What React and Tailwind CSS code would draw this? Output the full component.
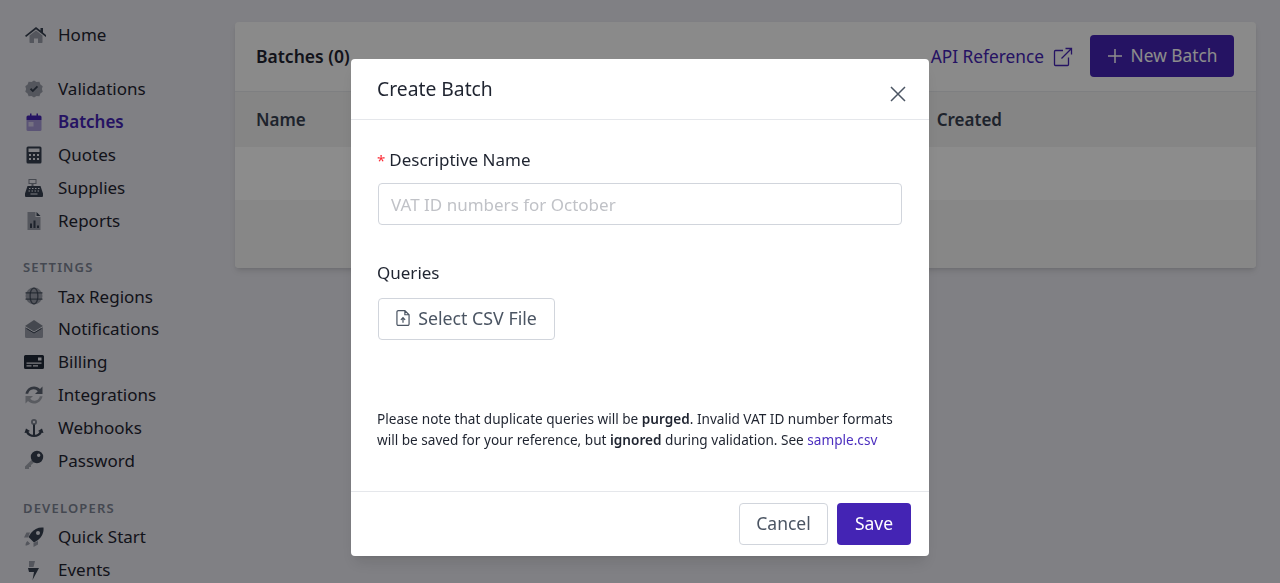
import React from "react";

const Duo = ({ children, w = 20 }) => (
  <svg width={w} height={20} viewBox="0 0 20 20" className="shrink-0 text-[#374151]" fill="currentColor">
    {children}
  </svg>
);

const HomeIcon = () => (
  <Duo w={22}>
    <path opacity=".45" d="M4.500 10.500 11 5.500l6.500 5v6.700a.8.8 0 0 1-.8.8H13v-4.500H9V18H5.300a.8.8 0 0 1-.8-.8z" />
    <path d="M11 2 15.500 5.500V3h2.500v4.500l4 3.200-1.100 1.300L11 4.300 1.100 12 0 10.700z" />
  </Duo>
);
const BadgeIcon = () => (
  <Duo>
    <path opacity=".45" d="M10 1.500l2.500 1.500 2.900-.2 1 2.700 2.300 1.800-.8 2.700.8 2.700-2.300 1.800-1 2.700-2.900-.2L10 18.500 7.500 17l-2.900.2-1-2.700-2.300-1.800.8-2.700-.8-2.700 2.300-1.800 1-2.700 2.900.2z" />
    <path d="M8.800 13.300 5.900 10.400l1.300-1.300 1.600 1.600 4-4 1.300 1.300z" />
  </Duo>
);
const CalendarIcon = () => (
  <svg width={20} height={20} viewBox="0 0 20 20" className="shrink-0 text-[#4424b4]" fill="currentColor">
    <path opacity=".4" d="M2.500 8h15v9.500a1.500 1.500 0 0 1-1.500 1.500H4a1.500 1.500 0 0 1-1.500-1.500z" />
    <path d="M4 3.500h2V1.500h1.500v2h5v-2H14v2h2A1.500 1.500 0 0 1 17.500 5v3h-15V5A1.500 1.500 0 0 1 4 3.500z" />
    <rect x="4.500" y="10" width="5" height="4.500" fill="#fff" opacity=".5" />
  </svg>
);
const CalcIcon = () => (
  <Duo>
    <path fillRule="evenodd" d="M4 1.500h12A1.500 1.500 0 0 1 17.500 3v14a1.500 1.500 0 0 1-1.500 1.500H4A1.500 1.500 0 0 1 2.500 17V3A1.500 1.500 0 0 1 4 1.500zM4.500 3.500v3.500h11V3.500zM5 9v2h2V9zm4 0v2h2V9zm4 0v2h2V9zM5 13v2h2v-2zm4 0v2h2v-2zm4 0v2h2v-2z" />
  </Duo>
);
const RegisterIcon = () => (
  <Duo>
    <path opacity=".6" fillRule="evenodd" d="M4.500 1h8v5h-3v2h-2V6h-3zM5.500 2v3h6V2z" />
    <path fillRule="evenodd" d="M3.500 8h13l2.500 7.500V18a1 1 0 0 1-1 1H2a1 1 0 0 1-1-1v-2.500zM5 10v1h1.500v-1zm3 0v1h1.500v-1zm3 0v1h1.500v-1zm3 0v1h1.500v-1zM4.500 12.500v1H6v-1zm3 0v1H9v-1zm3 0v1h1.500v-1zm3 0v1H15v-1zM6.500 15.500v1h7v-1z" />
  </Duo>
);
const ReportIcon = () => (
  <Duo>
    <path opacity=".45" d="M3.500 1h8v5h5v13h-13z" />
    <path d="M12.500 1 16.500 5h-4zM6 12.500h2V17H6zm3.500-3h2V17h-2zm3.500 5h2V17h-2z" />
  </Duo>
);
const GlobeIcon = () => (
  <Duo>
    <circle cx="10" cy="10" r="8.500" opacity=".45" />
    <path opacity=".8" d="M1.500 6.300h17v1.300h-17zm0 6.100h17v1.300h-17z" />
    <path opacity=".8" fillRule="evenodd" d="M10 1.500c2.800 0 4.500 3.800 4.500 8.500s-1.700 8.500-4.500 8.500-4.500-3.800-4.500-8.500 1.700-8.500 4.500-8.500zM10 2.800c-1.900 0-3.200 3.200-3.200 7.200s1.300 7.200 3.200 7.200 3.200-3.200 3.200-7.200-1.300-7.200-3.200-7.200z" />
  </Duo>
);
const MailIcon = () => (
  <Duo>
    <path opacity=".45" d="M1 8v9.500A1.500 1.500 0 0 0 2.500 19h15a1.500 1.500 0 0 0 1.500-1.500V8L10 13.500z" />
    <path opacity=".6" d="M10 1 19 7 10 12.500 1 7z" />
    <path fill="none" stroke="currentColor" strokeWidth="1" d="M2.500 9.500 10 14l7.500-4.500" />
  </Duo>
);
const CardIcon = () => (
  <svg width={20} height={20} viewBox="0 0 20 20" className="shrink-0 text-[#1f2937]" fill="currentColor">
    <path fillRule="evenodd" d="M1.500 3h17A1.500 1.500 0 0 1 20 4.500v11a1.500 1.500 0 0 1-1.500 1.500h-17A1.500 1.500 0 0 1 0 15.500v-11A1.500 1.500 0 0 1 1.500 3zM14 5.500v3h3.500v-3zM2.500 10.500v1.200h15v-1.200zm0 2.800v1.200h5v-1.200zm6.500 0v1.200h5v-1.200z" />
  </svg>
);
const SyncIcon = () => (
  <Duo>
    <path opacity=".8" d="M1.500 8.800C2.200 4.700 5.700 1.500 10 1.500c2.400 0 4.500 1 6 2.500l2.500-2.500V9h-7.500l2.800-2.800A5.500 5.500 0 0 0 4.200 8.800z" />
    <path opacity=".4" d="M18.500 11.200c-.7 4.100-4.200 7.300-8.500 7.300-2.400 0-4.500-1-6-2.500l-2.500 2.500V11H9l-2.800 2.800a5.500 5.500 0 0 0 9.600-2.600z" />
  </Duo>
);
const AnchorIcon = () => (
  <Duo>
    <path opacity=".6" fillRule="evenodd" d="M10 1a3 3 0 1 1 0 6 3 3 0 0 1 0-6zm0 1.800a1.200 1.200 0 1 0 0 2.400 1.200 1.200 0 0 0 0-2.400z" />
    <path d="M9 6.500h2v10.300c2.300-.3 4-1.500 4.600-3.100L14 13l4-2.500 1.500 4.500-1.700-.3C16.800 17.300 13.800 19 10 19s-6.800-1.700-7.800-4.300L.5 15 2 10.500 6 13l-1.600.7c.6 1.600 2.300 2.800 4.600 3.100z" />
  </Duo>
);
const KeyIcon = () => (
  <Duo>
    <path opacity=".4" d="M8 9.500 1 16.500V19h4v-2h2v-2l3-2.500z" />
    <path fillRule="evenodd" d="M13 .8a6.200 6.200 0 1 1 0 12.400A6.200 6.200 0 0 1 13 .8zm1.700 2.800a1.700 1.700 0 1 0 0 3.400 1.700 1.700 0 0 0 0-3.400z" />
  </Duo>
);
const RocketIcon = () => (
  <Duo>
    <path opacity=".45" d="M6 5.500H2.500L0 10.500h4zM14 14v3.500L9.500 20v-4zM3.500 14c-1.500 1-2 3-2 4.500 1.500 0 3.500-.5 4.500-2z" />
    <path fillRule="evenodd" d="M19.500.5c.5 5-1.500 9.500-5.500 12.500l-4 2.500L4.500 10 7 6C10 2 14.500 0 19.500.5zM14 4a2 2 0 1 0 0 4 2 2 0 0 0 0-4z" />
  </Duo>
);
const BoltIcon = () => (
  <Duo>
    <path opacity=".45" d="M5 1h6l-1.500 6H5z" />
    <path d="M4 8h11L8.500 20l1.500-8H5z" />
  </Duo>
);

const groups = [
  { wrap: "pb-px", row: "h-[33px]", items: [{ label: "Home", icon: HomeIcon }] },
  {
    row: "h-[33px]",
    items: [
      { label: "Validations", icon: BadgeIcon },
      { label: "Batches", icon: CalendarIcon, active: true },
      { label: "Quotes", icon: CalcIcon },
      { label: "Supplies", icon: RegisterIcon },
      { label: "Reports", icon: ReportIcon },
    ],
  },
  {
    wrap: "pb-px",
    row: "h-[32.8px]",
    title: "SETTINGS",
    items: [
      { label: "Tax Regions", icon: GlobeIcon },
      { label: "Notifications", icon: MailIcon },
      { label: "Billing", icon: CardIcon },
      { label: "Integrations", icon: SyncIcon },
      { label: "Webhooks", icon: AnchorIcon },
      { label: "Password", icon: KeyIcon },
    ],
  },
  {
    row: "h-[32.8px]",
    title: "DEVELOPERS",
    items: [
      { label: "Quick Start", icon: RocketIcon },
      { label: "Events", icon: BoltIcon },
    ],
  },
];

const Sidebar = () => (
  <aside className="w-[235px] shrink-0 pl-[24px] pt-[18px] flex flex-col gap-[20px]">
    {groups.map((g, i) => (
      <div key={i} className={g.wrap}>
        {g.title && (
          <p className="h-[23px] text-[13px] leading-[20px] font-semibold tracking-[0.09em] text-[#7c8494] -ml-px">
            {g.title}
          </p>
        )}
        {g.items.map((item) => {
          const Icon = item.icon;
          return (
            <div key={item.label} className={`flex items-center ${g.row}`}>
              <span className="w-[34px] shrink-0">
                <Icon />
              </span>
              <span className={`text-[17px] ${item.active ? "font-semibold text-[#4424b4]" : "text-[#1f2430]"}`}>
                {item.label}
              </span>
            </div>
          );
        })}
      </div>
    ))}
  </aside>
);

const BatchesCard = () => (
  <section className="mt-[22px] mr-[24px] flex-1 h-[246px] bg-[#fbfbfb] rounded-[4px] shadow-md">
    <div className="h-[70px] pl-[21px] pr-[22px] flex items-center justify-between border-b border-gray-200">
      <h2 className="text-[17.5px] font-semibold text-[#1f2430]">Batches (0)</h2>
      <div className="flex items-center gap-[17px]">
        <a className="flex items-center gap-[9px] text-[17.3px] text-[#4424b4]">
          API Reference
          <svg width="20" height="20" viewBox="0 0 20 20" fill="none" stroke="currentColor" strokeWidth="1.300">
            <path d="M10 3.500H2.500a1 1 0 0 0-1 1v13a1 1 0 0 0 1 1h12a1 1 0 0 0 1-1v-7M8.500 11.500 18.500 1.500M12.500 1.500h6v6" />
          </svg>
        </a>
        <button className="h-[42px] w-[144px] mb-px rounded-[4px] bg-[#4424b4] text-white text-[17.3px] flex items-center justify-center gap-[8px]">
          <svg width="16" height="16" viewBox="0 0 16 16" fill="none" stroke="currentColor" strokeWidth="1.500">
            <path d="M8 1v14M1 8h14" />
          </svg>
          New Batch
        </button>
      </div>
    </div>
    <div className="h-[55px] px-[21px] flex items-center justify-between bg-[#f2f2f2] text-[17px] font-semibold text-[#374151]">
      <span>Name</span>
      <span className="mr-[233px]">Created</span>
    </div>
    <div className="h-[53px] bg-white" />
    <div className="h-[68px] bg-[#f6f6f6] rounded-b-[4px]" />
  </section>
);

const CreateBatchModal = () => (
  <div className="fixed inset-0 bg-black/45 flex justify-center pt-[59px]">
    <div className="w-[578px] h-[497px] bg-white rounded-[4px] shadow-lg flex flex-col">
      <div className="h-[61px] shrink-0 pl-[26px] pr-[23px] flex items-center justify-between border-b border-gray-200">
        <h3 className="text-[19.3px] text-[#1f2430]">Create Batch</h3>
        <svg width="16" height="16" viewBox="0 0 16 16" fill="none" stroke="#4b5563" strokeWidth="1.500" className="mt-[9px]">
          <path d="M1 1l14 14M15 1 1 15" />
        </svg>
      </div>
      <div className="flex-1 px-[27px] pt-[27px]">
        <label className="block h-[36px] -ml-px text-[17px] leading-[26px] text-[#1f2430]">
          <span className="text-red-500 text-[15px] mr-[4px]">*</span>Descriptive Name
        </label>
        <input
          className="w-[524px] h-[42px] px-[12px] rounded-[4px] border border-gray-300 text-[17px] outline-none placeholder:text-[#c0c2c7]"
          placeholder="VAT ID numbers for October"
        />
        <label className="block mt-[35px] h-[38px] -ml-px text-[17px] leading-[26px] text-[#1f2430]">Queries</label>
        <button className="h-[42px] w-[177px] pb-[2px] rounded-[4px] border border-gray-300 flex items-center justify-center gap-[8px] text-[17.8px] text-[#4b5563]">
          <svg width="14" height="18" viewBox="0 0 15 18" fill="none" stroke="currentColor" strokeWidth="1.300">
            <path d="M2.500 1h7L14 5.500V15.500a1.500 1.500 0 0 1-1.500 1.500h-10A1.500 1.500 0 0 1 1 15.500v-13A1.500 1.500 0 0 1 2.500 1zM9.500 1v4.500H14" />
            <path d="M7.500 14V9M5.200 11 7.500 8.700 9.800 11" />
          </svg>
          Select CSV File
        </button>
        <p className="mt-[68px] -ml-px whitespace-nowrap text-[13.6px] leading-[21px] text-[#1f2430]">
          Please note that duplicate queries will be <b className="font-semibold">purged</b>. Invalid VAT ID number formats
          <br />
          will be saved for your reference, but <b className="font-semibold">ignored</b> during validation. See{" "}
          <a className="text-[#4c2fbf]">sample.csv</a>
        </p>
      </div>
      <div className="h-[65px] shrink-0 pr-[18px] flex items-center justify-end gap-[9px] border-t border-gray-200">
        <button className="w-[89px] h-[42px] pb-[2px] rounded-[4px] border border-gray-300 text-[17.5px] text-[#4b5563]">Cancel</button>
        <button className="w-[74px] h-[42px] pb-[2px] rounded-[4px] bg-[#4424b4] text-[17.5px] text-white">Save</button>
      </div>
    </div>
  </div>
);

export default function App() {
  return (
    <div className="h-[583px] overflow-hidden flex bg-[#e9e9f0] font-['Noto_Sans','Liberation_Sans',sans-serif]">
      <Sidebar />
      <BatchesCard />
      <CreateBatchModal />
    </div>
  );
}
